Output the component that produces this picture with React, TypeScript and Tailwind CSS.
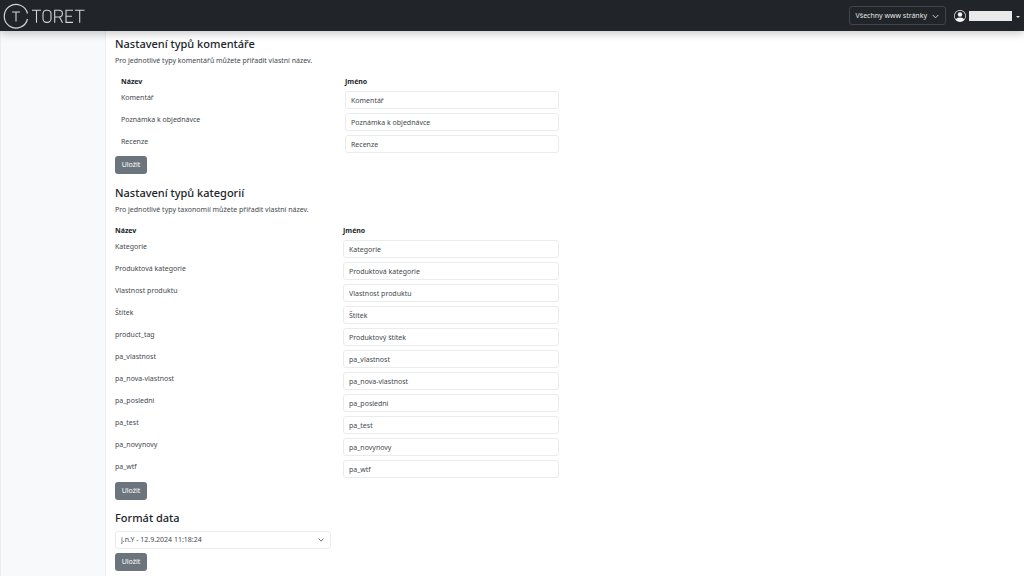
import { useState } from 'react';

type TypeRow = {
  id: string;
  label: string;
  name: string;
};

const COMMENT_TYPES: TypeRow[] = [
  { id: 'comment', label: 'Komentář', name: 'Komentář' },
  { id: 'order_note', label: 'Poznámka k objednávce', name: 'Poznámka k objednávce' },
  { id: 'review', label: 'Recenze', name: 'Recenze' },
];

const CATEGORY_TYPES: TypeRow[] = [
  { id: 'category', label: 'Kategorie', name: 'Kategorie' },
  { id: 'product_cat', label: 'Produktová kategorie', name: 'Produktová kategorie' },
  { id: 'product_attr', label: 'Vlastnost produktu', name: 'Vlastnost produktu' },
  { id: 'post_tag', label: 'Štítek', name: 'Štítek' },
  { id: 'product_tag', label: 'product_tag', name: 'Produktový štítek' },
  { id: 'pa_vlastnost', label: 'pa_vlastnost', name: 'pa_vlastnost' },
  { id: 'pa_nova-vlastnost', label: 'pa_nova-vlastnost', name: 'pa_nova-vlastnost' },
  { id: 'pa_posledni', label: 'pa_posledni', name: 'pa_posledni' },
  { id: 'pa_test', label: 'pa_test', name: 'pa_test' },
  { id: 'pa_novynovy', label: 'pa_novynovy', name: 'pa_novynovy' },
  { id: 'pa_wtf', label: 'pa_wtf', name: 'pa_wtf' },
];

const Chevron = ({ className }: { className: string }) => (
  <svg viewBox="0 0 16 16" fill="none" stroke="currentColor" strokeWidth="2" strokeLinecap="round" strokeLinejoin="round" className={className} aria-hidden="true">
    <path d="m2 5 6 6 6-6" />
  </svg>
);

const Logo = () => (
  <svg viewBox="0 0 84 28" fill="none" stroke="#d3d5d6" className="h-7 w-21" role="img" aria-label="Toret">
    <path d="M25.5 11.5A11.8 11.8 0 1 0 25.5 17" strokeWidth="1.2" />
    <path d="M10 10h8M14 10v9.5" strokeWidth="1.1" />
    <g strokeWidth="1.1">
      <path d="M30 8.2h9M34.5 8.2v12.6" />
      <rect x="41" y="8.2" width="8" height="12.2" rx="3.6" />
      <path d="M52.7 20.8V8.2h4.3a3.2 3.2 0 0 1 0 6.8h-4.3M57.5 15l3 5.8" />
      <path d="M71 8.2h-7v12.2h7M64 14.2h6" />
      <path d="M73 8.2h9.5M77.7 8.2v12.6" />
    </g>
  </svg>
);

const SaveButton = () => (
  <button type="submit" className="block h-[18px] w-8 rounded-[3px] bg-[#6c757d] text-center text-[7px] leading-[18px] text-white">
    Uložit
  </button>
);

const TypeTable = ({ rows, firstColumn }: { rows: TypeRow[]; firstColumn: string }) => {
  const [names, setNames] = useState<Record<string, string>>(
    Object.fromEntries(rows.map(row => [row.id, row.name]))
  );

  return (
    <table className="w-full table-fixed border-collapse text-left">
      <thead>
        <tr className="text-[#212529]">
          <th scope="col" className={`${firstColumn} p-0 pt-px pb-px leading-3 font-bold`}>Název</th>
          <th scope="col" className="p-0 pt-px pb-px leading-3 font-bold">Jméno</th>
        </tr>
      </thead>
      <tbody>
        {rows.map(row => (
          <tr key={row.id}>
            <td className="px-0 py-0.5 align-top">
              <label htmlFor={row.id} className="block leading-[14px]">{row.label}</label>
            </td>
            <td className="px-0 py-0.5">
              <input
                id={row.id}
                type="text"
                value={names[row.id]}
                onChange={e => setNames(prev => ({ ...prev, [row.id]: e.target.value }))}
                className="block h-[18px] w-full rounded-[3px] border border-[#e9ebed] bg-white px-[5px] text-[7px] text-[#45494d]"
              />
            </td>
          </tr>
        ))}
      </tbody>
    </table>
  );
};

const App = () => {
  const [format, setFormat] = useState('jnY');

  return (
    <div className="flex min-h-screen flex-col bg-white font-['Noto_Sans','Open_Sans',sans-serif] text-[7px] text-[#45494d]">
      <header className="relative flex h-[31px] items-center justify-between bg-[#212529] pr-1 pl-0.5 shadow-[0_3px_8px_rgba(0,0,0,0.2)]">
        <a href="#"><Logo /></a>
        <div className="flex items-center">
          <button type="button" className="flex h-[19px] items-center gap-[5px] rounded-[3px] border border-[#41464b] px-[6px] pt-px text-[#e3e4e5]">
            Všechny www stránky
            <Chevron className="size-[7px]" />
          </button>
          <button type="button" aria-label="Uživatelský účet" className="ml-2 flex items-center">
            <svg viewBox="0 0 16 16" fill="#f1f2f2" className="size-3" aria-hidden="true">
              <path d="M11 6a3 3 0 1 1-6 0 3 3 0 0 1 6 0" />
              <path fillRule="evenodd" d="M0 8a8 8 0 1 1 16 0A8 8 0 0 1 0 8m8-7a7 7 0 0 0-5.468 11.37C3.242 11.226 4.805 10 8 10s4.757 1.225 5.468 2.37A7 7 0 0 0 8 1" />
            </svg>
            <span className="ml-[3px] h-2.5 w-[43px] bg-[#e9e9e9]" />
            <svg viewBox="0 0 4 2" fill="#e3e4e5" className="mt-0.5 ml-1 h-0.5 w-1" aria-hidden="true">
              <path d="M0 0h4L2 2z" />
            </svg>
          </button>
        </div>
      </header>

      <div className="flex flex-1">
        <aside className="w-[106px] shrink-0 border-r border-l border-[#eceef0] bg-[#f8f9fa]" />
        <main className="min-w-0 flex-1 px-[9px] pt-[5px] pb-[5px]">
          <form className="max-w-[444px]" onSubmit={e => e.preventDefault()}>
            <h2 className="text-[11px] leading-4 font-medium text-[#212529]">Nastavení typů komentáře</h2>
            <p className="mt-[3px] mb-2 leading-3">Pro jednotlivé typy komentářů můžete přiřadit vlastní název.</p>
            <div className="mb-px pl-[6px]">
              <TypeTable rows={COMMENT_TYPES} firstColumn="w-[224px]" />
            </div>
            <SaveButton />
          </form>

          <form className="mt-[11px] max-w-[444px]" onSubmit={e => e.preventDefault()}>
            <h2 className="text-[11px] leading-4 font-medium text-[#212529]">Nastavení typů kategorií</h2>
            <p className="mt-[3px] mb-2 leading-3">Pro jednotlivé typy taxonomií můžete přiřadit vlastní název.</p>
            <div className="mb-0.5">
              <TypeTable rows={CATEGORY_TYPES} firstColumn="w-[228px]" />
            </div>
            <SaveButton />
          </form>

          <form className="mt-2.5" onSubmit={e => e.preventDefault()}>
            <h2 className="text-[11px] leading-4 font-medium text-[#212529]">
              <label htmlFor="date-format">Formát data</label>
            </h2>
            <div className="mt-[5px] mb-1 grid max-w-[216px] items-center">
              <select
                id="date-format"
                value={format}
                onChange={e => setFormat(e.target.value)}
                className="col-start-1 row-start-1 h-[18px] w-full appearance-none rounded-[3px] border border-[#e9ebed] bg-white px-[5px] text-[7px] text-[#45494d]"
              >
                <option value="jnY">j.n.Y - 12.9.2024 11:18:24</option>
                <option value="Ymd">Y-m-d - 2024-09-12 11:18:24</option>
              </select>
              <Chevron className="pointer-events-none col-start-1 row-start-1 mr-[7px] size-[6px] justify-self-end text-[#343a40]" />
            </div>
            <SaveButton />
          </form>
        </main>
      </div>
    </div>
  );
};

export default App;
